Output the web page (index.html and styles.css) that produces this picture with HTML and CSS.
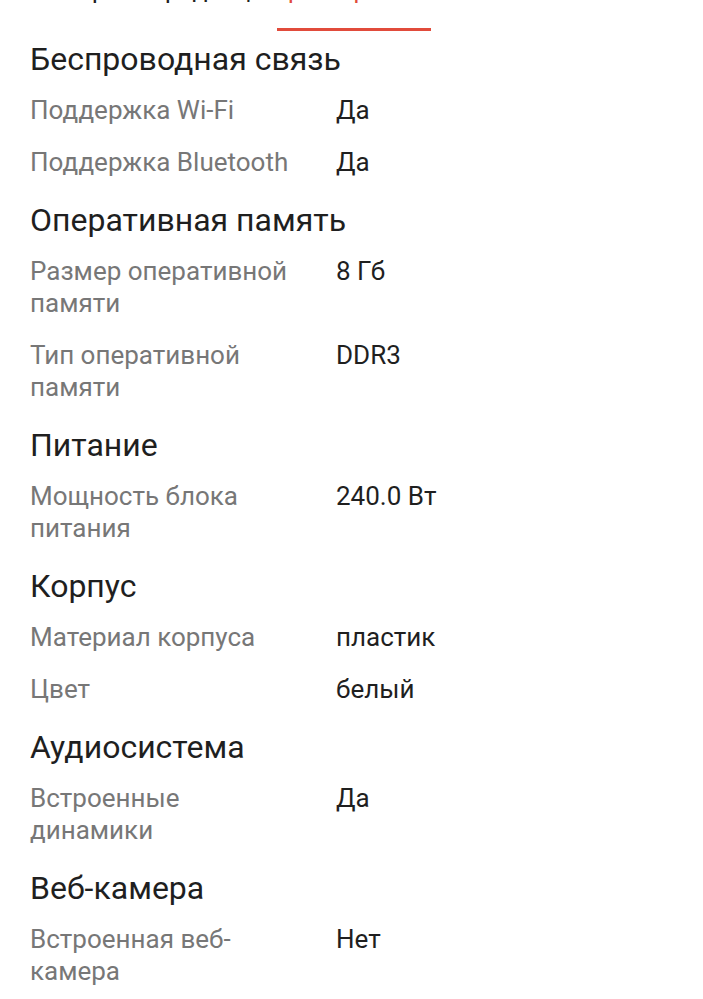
FILE: index.html
```html
<!DOCTYPE html>
<html lang="ru">
<head>
<meta charset="utf-8">
<link rel="stylesheet" href="styles.css">
</head>
<body>
<nav class="tabs">
  <div class="tab tab-1">Обзор</div>
  <div class="tab tab-2">Продавцы</div>
  <div class="tab tab-3 active">Характеристики</div>
  <div class="tab tab-4">Отзывы</div>
</nav>
<main class="specs">
  <section class="group">
    <h2 class="group-title">Беспроводная связь</h2>
    <div class="row"><div class="label">Поддержка Wi-Fi</div><div class="value">Да</div></div>
    <div class="row"><div class="label">Поддержка Bluetooth</div><div class="value">Да</div></div>
  </section>
  <section class="group">
    <h2 class="group-title">Оперативная память</h2>
    <div class="row"><div class="label">Размер оперативной памяти</div><div class="value">8 Гб</div></div>
    <div class="row"><div class="label">Тип оперативной памяти</div><div class="value">DDR3</div></div>
  </section>
  <section class="group">
    <h2 class="group-title">Питание</h2>
    <div class="row"><div class="label">Мощность блока питания</div><div class="value">240.0 Вт</div></div>
  </section>
  <section class="group">
    <h2 class="group-title">Корпус</h2>
    <div class="row"><div class="label">Материал корпуса</div><div class="value">пластик</div></div>
    <div class="row"><div class="label">Цвет</div><div class="value">белый</div></div>
  </section>
  <section class="group">
    <h2 class="group-title">Аудиосистема</h2>
    <div class="row"><div class="label">Встроенные динамики</div><div class="value">Да</div></div>
  </section>
  <section class="group">
    <h2 class="group-title">Веб-камера</h2>
    <div class="row"><div class="label">Встроенная веб-камера</div><div class="value">Нет</div></div>
  </section>
</main>
</body>
</html>
```
FILE: styles.css
```css
html, body {
  margin: 0;
  padding: 0;
  background: #ffffff;
  overflow: hidden;
}
body {
  font-family: Roboto, "Noto Sans", sans-serif;
  color: #212121;
}
.tabs {
  display: flex;
  margin-top: -26px;
  height: 57px;
  white-space: nowrap;
}
.tab {
  font-size: 25px;
  line-height: 32px;
  color: #212121;
  text-align: center;
  box-sizing: border-box;
  border-bottom: 3px solid transparent;
  overflow: visible;
  display: flex;
  justify-content: center;
}
.tab-1 { width: 140px; }
.tab-2 { width: 137px; }
.tab-3 { width: 154px; }
.tab-4 { width: 130px; }
.tab.active {
  color: #e14b3b;
  border-bottom-color: #e14b3b;
}
.specs {
  display: flex;
  flex-direction: column;
  gap: 22px;
  padding: 8px 30px 0 30px;
}
.group {
  display: flex;
  flex-direction: column;
  gap: 20px;
}
.group-title {
  margin: 0 0 -5px 0;
  font-size: 32px;
  line-height: 40px;
  font-weight: 400;
  color: #1f1f1f;
}
.row {
  display: grid;
  grid-template-columns: 266px 1fr;
  column-gap: 40px;
  font-size: 26px;
  line-height: 32px;
}
.label {
  color: #777777;
}
.value {
  color: #1f1f1f;
}
```
